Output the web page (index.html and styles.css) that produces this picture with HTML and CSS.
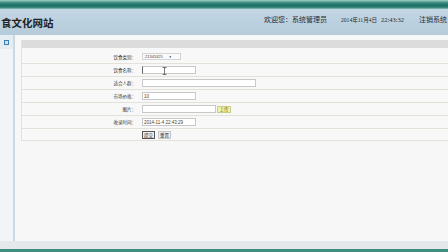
FILE: index.html
```html
<!DOCTYPE html>
<html>
  <head>
    <title>饮食文化网站</title>
    <link rel="stylesheet" href="styles.css">
  </head>
  <body>
    <div class="topbar"></div>
    <div class="header">
      <div class="title">食文化网站</div>
      <div class="info">
        <span class="welcome">欢迎您：系统管理员</span
        ><span class="date">2014年11月4日</span
        ><span class="time">22:43:32</span
        ><span class="logout">注销系统</span>
      </div>
    </div>
    <div class="main">
      <div class="side">
        <div class="side-head"><span class="side-icon"></span></div>
      </div>
      <div class="content">
        <div class="food-form">
          <div class="row head-row"></div>
          <div class="row first-row">
            <label>饮食类别：</label>
            <div class="field">
              <div class="select">21345325<span class="arrow">▼</span></div>
            </div>
          </div>
          <div class="row">
            <label>饮食名称：</label>
            <div class="field">
              <input type="text" class="input short focus" />
              <svg class="ibeam" width="5" height="8" viewBox="0 0 5 8">
                <path d="M0.5 0.5h4M2.5 0.5v7M0.5 7.5h4" stroke="#555" stroke-width="0.8" fill="none" />
              </svg>
            </div>
          </div>
          <div class="row">
            <label>适合人群：</label>
            <div class="field"><input type="text" class="input long" /></div>
          </div>
          <div class="row">
            <label>市场价格：</label>
            <div class="field"><input type="text" class="input short" value="10" /></div>
          </div>
          <div class="row">
            <label>图片：</label>
            <div class="field">
              <input type="text" class="input mid" />
              <span class="upload">上传</span>
            </div>
          </div>
          <div class="row">
            <label>收录时间：</label>
            <div class="field"><input type="text" class="input short" value="2014-11-4 22:43:29" /></div>
          </div>
          <div class="row last-row">
            <label></label>
            <div class="field">
              <span class="btn btn-focus">提交</span>
              <span class="btn">重置</span>
            </div>
          </div>
        </div>
      </div>
    </div>
    <div class="footer"></div>
    <div class="bottomline"></div>
  </body>
</html>
```

FILE: styles.css
```css
html,
body {
  margin: 0;
  padding: 0;
}

body {
  width: 448px;
  height: 252px;
  overflow: hidden;
  background: #f7f7f7;
  font-family: "Noto Sans CJK SC", "Liberation Sans", sans-serif;
  color: #333;
}

.topbar {
  height: 9px;
  background: linear-gradient(#a4cfc6 0, #47988a 25%, #1d6f63 55%, #2a7e71 80%, #8fbfb6 100%);
}

.header {
  height: 26px;
  display: grid;
  grid-template-columns: 264px 1fr;
  align-items: center;
  background: linear-gradient(#c3d7e5, #b5cbdb);
  white-space: nowrap;
  overflow: hidden;
}

.title {
  padding-left: 1px;
  font-size: 10.5px;
  font-weight: 600;
  color: #222;
  font-family: "Noto Sans CJK SC", serif;
}

.info {
  font-size: 6px;
  color: #2c2c2c;
  padding-bottom: 6px;
  font-family: "Liberation Serif", "Noto Sans CJK SC", serif;
}

.info span {
  display: inline-block;
}

.welcome {
  width: 77px;
  font-size: 7px;
}

.date {
  width: 40px;
  font-size: 5.6px;
}

.time {
  width: 38px;
  font-size: 6.5px;
}

.logout {
  font-size: 7px;
}

.main {
  height: 206px;
  display: flex;
}

.side {
  width: 13px;
  background: #f2f5f7;
  border-right: 2px solid #cdd9e2;
}

.side-head {
  height: 14px;
  background: #e4edf2;
  display: flex;
  align-items: center;
  justify-content: center;
}

.side-icon {
  width: 3px;
  height: 3px;
  border: 1px solid #3f7fb0;
  background: #cfe2f0;
}

.content {
  flex: 1;
  padding: 5px 0 0 6px;
  overflow: hidden;
  background: #f7f7f7;
}

.food-form {
  width: 440px;
  border-left: 1px solid #e2e2da;
  background: #f8f8f8;
}

.row {
  display: grid;
  grid-template-columns: 116px 1fr;
  align-items: center;
  height: 13px;
  box-sizing: border-box;
  border-bottom: 1px solid #e2e2da;
}

.head-row {
  height: 8px;
  background: #dcdcdc;
  border-bottom: none;
}

.first-row {
  height: 16px;
  padding-top: 2px;
}

.last-row {
  height: 12px;
}

label {
  text-align: right;
  padding-right: 2px;
  font-size: 4.5px;
  color: #333;
}

.field {
  position: relative;
  display: flex;
  align-items: center;
  padding-left: 4px;
}

.input {
  height: 8px;
  box-sizing: border-box;
  border: 1px solid #c8c8c8;
  background: #fff;
  padding: 0 1px;
  margin: 0;
  font-size: 4.5px;
  font-family: "Liberation Sans", sans-serif;
  color: #444;
  outline: none;
}

.short {
  width: 54px;
}

.mid {
  width: 74px;
}

.long {
  width: 114px;
}

.focus {
  border-left-color: #666;
}

.ibeam {
  position: absolute;
  left: 24px;
  top: 1px;
}

.select {
  width: 39px;
  height: 7px;
  box-sizing: border-box;
  border: 1px solid #d4d4d4;
  background: #fafafa;
  font-size: 4px;
  line-height: 5px;
  padding-left: 2px;
  font-family: "Liberation Sans", sans-serif;
  color: #444;
}

.arrow {
  font-size: 3px;
  margin-left: 6px;
  color: #333;
}

.upload {
  margin-left: 1px;
  height: 7px;
  width: 14px;
  box-sizing: border-box;
  border: 1px solid #c8cc8c;
  background: #f1f2a6;
  font-size: 4.5px;
  line-height: 5px;
  text-align: center;
  color: #5f6e25;
}

.btn {
  height: 8px;
  width: 13px;
  margin-right: 3px;
  box-sizing: border-box;
  border: 1px solid #c6c6c6;
  background: #eeeeee;
  font-size: 4.5px;
  line-height: 6px;
  text-align: center;
  color: #333;
}

.btn-focus {
  border-color: #555;
}

.footer {
  height: 8px;
  background: #e5e8ea;
}

.bottomline {
  height: 3px;
  background: #3c8e7e;
}
```
